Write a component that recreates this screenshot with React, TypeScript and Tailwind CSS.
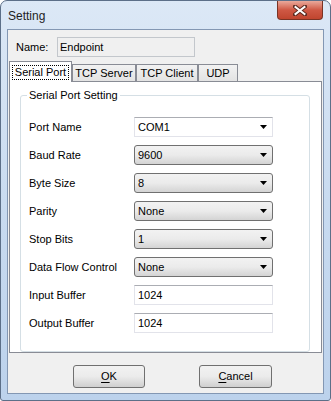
import React from "react";

const comboRows = [
  { label: "Port Name", value: "COM1", kind: "edit" },
  { label: "Baud Rate", value: "9600", kind: "list" },
  { label: "Byte Size", value: "8", kind: "list" },
  { label: "Parity", value: "None", kind: "list" },
  { label: "Stop Bits", value: "1", kind: "list" },
  { label: "Data Flow Control", value: "None", kind: "list" },
  { label: "Input Buffer", value: "1024", kind: "text" },
  { label: "Output Buffer", value: "1024", kind: "text" },
];

const Arrow = () => (
  <svg width="7" height="4" viewBox="0 0 7 4" className="mr-[5px]">
    <path d="M0 0 H7 L3.5 4 Z" fill="#000" />
  </svg>
);

const Field = ({ value, kind }: { value: string; kind: string }) => {
  if (kind === "list") {
    return (
      <div className="w-[139px] h-[20px] flex items-center justify-between rounded-[3px] border border-[#707070] bg-gradient-to-b from-[#f2f2f2] via-[#ebebeb] to-[#d4d4d4] pl-[3px]">
        <span>{value}</span>
        <Arrow />
      </div>
    );
  }
  if (kind === "edit") {
    return (
      <div className="w-[139px] h-[20px] flex items-center justify-between border border-[#e2e3ea] border-t-[#abadb3] bg-white pl-[3px]">
        <span>{value}</span>
        <Arrow />
      </div>
    );
  }
  return (
    <div className="w-[139px] h-[20px] flex items-center border border-[#e2e3ea] border-t-[#abadb3] bg-white pl-[3px]">
      {value}
    </div>
  );
};

const Tab = ({ label, width }: { label: string; width: string }) => (
  <div
    className={`${width} h-[18px] flex items-center justify-center border border-[#898c95] bg-gradient-to-b from-[#f2f2f2] to-[#e3e3e3]`}
  >
    {label}
  </div>
);

export default function App() {
  return (
    <div className="w-[331px] h-[401px] flex flex-col rounded-t-[7px] rounded-b-[3px] border border-[#5c6f88] bg-gradient-to-b from-[#dce8f6] via-[#c9dbf0] to-[#bcd2ec] font-['Liberation_Sans',Arial,sans-serif] text-[11px] text-black">
      {/* title bar */}
      <div className="h-[28px] flex items-start shrink-0">
        <span className="pl-[7px] pt-[6px] text-[12px] text-[#1e1e1e]">Setting</span>
        <div className="ml-auto mr-[7px] w-[46px] h-[19px] rounded-b-[4px] border border-t-0 border-[#7a3324] bg-gradient-to-b from-[#e9a99b] via-[#cf5844] to-[#c0452e] flex items-center justify-center">
          <svg width="14" height="11" viewBox="0 0 14 11">
            <path d="M2 1.5 L12 9.5 M12 1.5 L2 9.5" stroke="#5b2a20" strokeWidth="4" strokeLinecap="square" />
            <path d="M2.5 2 L11.5 9 M11.5 2 L2.5 9" stroke="#fff" strokeWidth="2" strokeLinecap="square" />
          </svg>
        </div>
      </div>

      {/* client area */}
      <div className="mx-[6px] h-[365px] shrink-0 flex flex-col border border-[#8397b3] bg-[#f0f0f0]">
        <div className="mt-[7px] flex items-center h-[20px]">
          <span className="ml-[8px] w-[41px]">Name:</span>
          <div className="w-[138px] h-[20px] flex items-center border border-[#c3c7cc] bg-[#f0f0f0] pl-[2px]">
            Endpoint
          </div>
        </div>

        {/* tabs */}
        <div className="mt-[4px] ml-[1px] h-[21px] flex items-end relative z-10">
          <div className="w-[63px] h-[21px] flex items-center justify-center border border-b-0 border-[#898c95] bg-white">
            <span className="border border-dotted border-black px-[2px] leading-[13px]">Serial Port</span>
          </div>
          <Tab label="TCP Server" width="w-[64px]" />
          <Tab label="TCP Client" width="w-[62px]" />
          <Tab label="UDP" width="w-[40px]" />
        </div>

        <div className="-mt-px ml-[1px] w-[313px] h-[272px] flex flex-col border border-[#898c95] bg-white">
          <fieldset className="mt-[7px] ml-[10px] w-[290px] h-[264px] border border-[#d5dfe5] rounded-[3px]">
            <legend className="ml-[6px] px-[2px] leading-[13px]">Serial Port Setting</legend>
            <div className="mt-[15px] flex flex-col">
              {comboRows.map((r) => (
                <div key={r.label} className="h-[28px] flex items-start">
                  <div className="h-[20px] w-[113px] pl-[8px] flex items-center">{r.label}</div>
                  <Field value={r.value} kind={r.kind} />
                </div>
              ))}
            </div>
          </fieldset>
        </div>

        {/* buttons */}
        <div className="mt-[12px] flex">
          <button className="ml-[65px] w-[72px] h-[23px] rounded-[3px] border border-[#707070] bg-gradient-to-b from-[#f2f2f2] via-[#ebebeb] to-[#cfcfcf]">
            <span className="underline underline-offset-2">O</span>K
          </button>
          <button className="ml-[54px] w-[73px] h-[23px] rounded-[3px] border border-[#707070] bg-gradient-to-b from-[#f2f2f2] via-[#ebebeb] to-[#cfcfcf]">
            <span className="underline underline-offset-2">C</span>ancel
          </button>
        </div>
      </div>
    </div>
  );
}
